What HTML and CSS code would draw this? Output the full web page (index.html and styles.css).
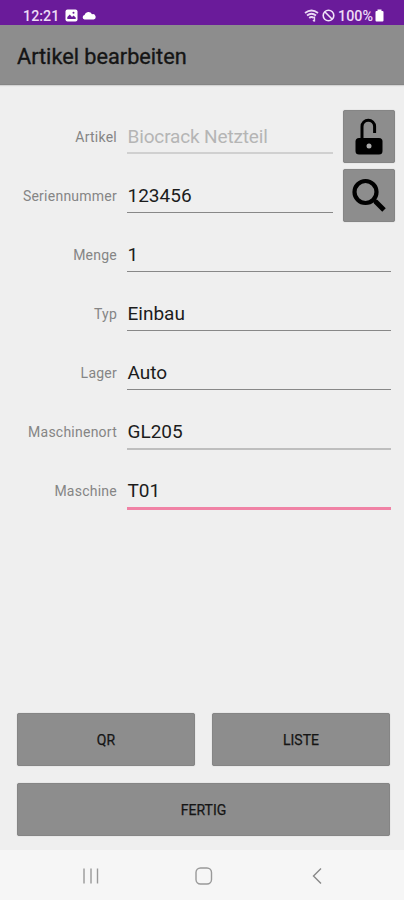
FILE: index.html
```html
<!DOCTYPE html>
<html lang="de">
<head>
<meta charset="utf-8">
<title>Artikel bearbeiten</title>
<link rel="stylesheet" href="styles.css">
</head>
<body>
<header class="status">
  <div class="status-left">
    <span class="clock">12:21</span>
    <svg width="13" height="13" viewBox="0 0 13 13"><rect x=".5" y=".5" width="12" height="12" rx="2" fill="#fff"/><path d="M2.300 10V8l2.500-2.500L7 8l1.500-1.500L10.700 8.500V10z" fill="#6a1b9a"/><circle cx="8.500" cy="3.700" r="1" fill="#6a1b9a"/></svg>
    <svg width="14" height="9" viewBox="0 0 14 9"><path d="M2.500 8.500a2.300 2.300 0 0 1 0-4.500A4 4 0 0 1 10 3.300a2.700 2.700 0 0 1 1.700 5.200z" fill="#fff"/></svg>
  </div>
  <div class="status-right">
    <svg width="17" height="14" viewBox="0 0 17 14" fill="none" stroke="#ead9f3" stroke-width="1.800"><path d="M1 4Q7.500-1 14 4M3 6.500Q7.500 3 12 6.500M5.200 9Q7.500 7 9.800 9"/><path d="M10.500 7.500v5m-1.500-1.500 1.500 1.500" stroke-width="1.300"/></svg>
    <svg width="13" height="13" viewBox="0 0 13 13" fill="none" stroke="#f0e3f7" stroke-width="1.600"><circle cx="6.500" cy="6.500" r="5.300"/><path d="m3 3 7 7"/></svg>
    <span class="percent">100%</span>
    <svg width="9" height="13" viewBox="0 0 9 13"><path d="M2.500 .5h4v1.500h1q1 0 1 1v8.500q0 1-1 1h-6q-1 0-1-1V3q0-1 1-1h1z" fill="#fff"/></svg>
  </div>
</header>
<div class="appbar"><h1>Artikel bearbeiten</h1></div>
<main>
  <div class="row short"><label>Artikel</label><div class="field disabled">Biocrack Netzteil</div>
    <button class="icon"><svg width="50" height="52" viewBox="1 0 50 52"><path d="M19 29V15.500a6.300 6.300 0 0 1 12.600 0V22" fill="none" stroke="#000" stroke-width="3"/><rect x="12.500" y="27" width="27" height="16.500" rx="3.500"/><circle cx="26" cy="35" r="2.500" fill="#aaa"/></svg></button></div>
  <div class="row short"><label>Seriennummer</label><div class="field">123456</div>
    <button class="icon"><svg width="50" height="52" viewBox="1 0 50 52" fill="none" stroke="#000"><circle cx="22.500" cy="22" r="11" stroke-width="4.200"/><path d="m30 29 3 3" stroke-width="4"/><path d="m32.500 31.500 8.500 8.500" stroke-width="5"/></svg></button></div>
  <div class="row"><label>Menge</label><div class="field">1</div></div>
  <div class="row"><label>Typ</label><div class="field">Einbau</div></div>
  <div class="row"><label>Lager</label><div class="field">Auto</div></div>
  <div class="row"><label>Maschinenort</label><div class="field soft">GL205</div></div>
  <div class="row"><label>Maschine</label><div class="field focus">T01</div></div>
  <div class="actions">
    <button>QR</button><button>LISTE</button><button class="wide">FERTIG</button>
  </div>
</main>
<nav>
  <svg width="18" height="18" viewBox="0 0 18 18" fill="none" stroke="#999" stroke-width="1.400"><path d="M2 1.500v15M9 1.500v15M15.500 1.500v15"/></svg>
  <svg width="18" height="18" viewBox="0 0 18 18" fill="none" stroke="#999" stroke-width="1.400"><rect x="1" y="1" width="15.500" height="16" rx="4.500"/></svg>
  <svg width="18" height="18" viewBox="0 0 18 18" fill="none" stroke="#888" stroke-width="1.400"><path d="M13 1.500 5.500 9l7.500 7.500"/></svg>
</nav>
</body>
</html>
```
FILE: styles.css
```css
* { box-sizing: border-box; }
body {
  margin: 0;
  height: 900px;
  display: flex;
  flex-direction: column;
  background: #efefef;
  font-family: Roboto, "Liberation Sans", sans-serif;
  overflow: hidden;
}
svg { display: block; flex: none; }
.status {
  height: 25px;
  padding: 6px 20px 0 23px;
  display: flex;
  justify-content: space-between;
  background: #6a1b9a;
  color: #eddcf6;
  font-size: 14.300px;
  font-weight: 500;
  line-height: 20px;
}
.status-left, .status-right { display: flex; align-items: center; height: 19px; }
.status-left { gap: 4px; }
.clock { width: 38px; }
.status-right { gap: 1px; }
.percent { margin: 0 1px 0 2px; }
.appbar {
  height: 60px;
  padding: 0 17px;
  display: flex;
  align-items: center;
  background: #8d8d8d;
  border-bottom: 1px solid #858585;
  box-shadow: 0 1px 1px #d4d4d4;
}
h1 {
  margin: 4px 0 0;
  font-size: 21.700px;
  font-weight: 400;
  -webkit-text-stroke: 0.350px #151515;
  line-height: 28px;
  color: #151515;
}
main {
  flex: 1;
  display: flex;
  flex-direction: column;
  padding: 22px 13px 14px 17px;
}
.row {
  height: 59px;
  display: grid;
  grid-template-columns: 100px 264px;
  column-gap: 10px;
  align-items: center;
}
.row.short { grid-template-columns: 100px 206px 52px; }
label {
  text-align: right;
  font-size: 14px;
  letter-spacing: 0.240px;
  color: #858585;
}
.field {
  align-self: start;
  height: 30px;
  margin-top: 17px;
  padding-left: 0.500px;
  font-size: 19px;
  line-height: 25px;
  color: #1c1c1c;
  border-bottom: 1px solid #888;
}
.disabled { color: #b5b5b5; letter-spacing: -0.150px; border-bottom: 2px solid #d0d0d0; }
.soft { height: 31px; border-bottom: 2px solid #bebebe; }
.focus { height: 32px; border-bottom: 3px solid #f082a5; }
button {
  height: 53px;
  padding: 0;
  border: 1px solid #858585;
  border-radius: 2px;
  background: #8d8d8d;
  color: #151515;
  font: 500 14px Roboto, sans-serif;
  box-shadow: 0 0 1px #aaa;
}
.icon {
  width: 52px;
  display: grid;
  place-items: center;
}
.actions {
  margin-top: auto;
  width: 373px;
  display: grid;
  grid-template-columns: 1fr 1fr;
  gap: 17px;
}
.actions button { font-weight: 400; -webkit-text-stroke: 0.250px #151515; }
.wide { grid-column: 1 / 3; }
nav {
  height: 50px;
  padding: 2px 78px 0 82px;
  display: flex;
  justify-content: space-between;
  align-items: center;
  background: #f6f6f6;
}
```
